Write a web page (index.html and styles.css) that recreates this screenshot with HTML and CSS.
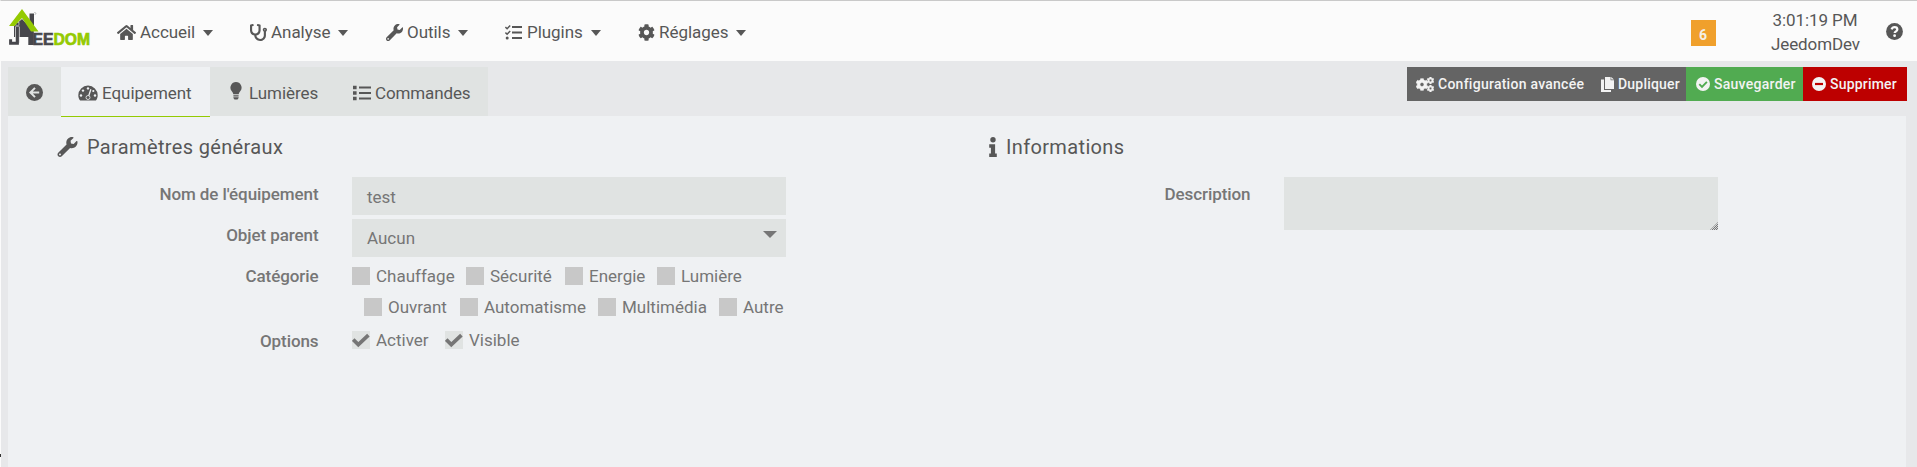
FILE: index.html
```html
<!DOCTYPE html>
<html lang="fr">
<head>
<meta charset="utf-8">
<title>Jeedom</title>
<link rel="stylesheet" href="styles.css">
</head>
<body>
<svg class="defs" aria-hidden="true">
  <symbol id="home" viewBox="0 0 576 512"><path d="M280.37 148.26L96 300.11V464a16 16 0 0 0 16 16l112.06-.29a16 16 0 0 0 15.92-16V368a16 16 0 0 1 16-16h64a16 16 0 0 1 16 16v95.64a16 16 0 0 0 16 16.05L464 480a16 16 0 0 0 16-16V300L295.67 148.26a12.19 12.19 0 0 0-15.3 0zM571.6 251.47L488 182.56V44.05a12 12 0 0 0-12-12h-56a12 12 0 0 0-12 12v72.61L318.47 43a48 48 0 0 0-61 0L4.34 251.47a12 12 0 0 0-1.6 16.9l25.5 31A12 12 0 0 0 45.15 301l235.22-193.74a12.19 12.19 0 0 1 15.3 0L530.9 301a12 12 0 0 0 16.9-1.6l25.5-31a12 12 0 0 0-1.7-16.93z"/></symbol>
  <symbol id="stetho" viewBox="0 0 512 512"><path d="M447.1 112c-34.2.5-62.3 28.4-63 62.6-.5 24.3 12.5 45.6 32 56.8V344c0 57.3-50.2 104-112 104-60 0-109.2-44.1-111.9-99.2C265 333.8 320 269.2 320 192V36.6c0-11.4-8.1-21.3-19.3-23.5L237.8.5c-13-2.6-25.6 5.8-28.2 18.8L206.4 35c-2.6 13 5.8 25.6 18.8 28.2l30.7 6.1v121.4c0 52.9-42.2 96.7-95.1 97.2-53.4.5-96.9-42.7-96.9-96V69.4l30.7-6.1c13-2.6 21.4-15.2 18.8-28.2l-3.1-15.7C107.7 6.4 95.1-2 82.1.6L19.3 13C8.1 15.3 0 25.1 0 36.6V192c0 77.3 55.1 142 128.1 156.8C130.7 439.2 208.6 512 304 512c97 0 176-75.4 176-168V231.4c19.1-11.1 32-31.7 32-55.4 0-35.7-29.2-64.5-64.9-64zm.9 80c-8.8 0-16-7.2-16-16s7.2-16 16-16 16 7.2 16 16-7.2 16-16 16z"/></symbol>
  <symbol id="wrench" viewBox="0 0 512 512"><path d="M507.73 109.1c-2.24-9.03-13.54-12.09-20.12-5.51l-74.36 74.36-67.88-11.31-11.31-67.88 74.36-74.36c6.62-6.62 3.43-17.9-5.66-20.16-47.38-11.74-99.55.91-136.58 37.93-39.64 39.64-50.55 97.1-34.05 147.2L18.74 402.76c-24.99 24.99-24.99 65.51 0 90.5 24.99 24.99 65.51 24.99 90.5 0l213.21-213.21c50.12 16.71 107.47 5.68 147.37-34.22 37.07-37.07 49.7-89.32 37.91-136.73zM64 472c-13.25 0-24-10.75-24-24 0-13.26 10.75-24 24-24s24 10.74 24 24c0 13.25-10.75 24-24 24z"/></symbol>
  <symbol id="cog" viewBox="0 0 512 512"><path d="M487.4 315.7l-42.6-24.6c4.3-23.2 4.3-47 0-70.2l42.6-24.6c4.9-2.8 7.1-8.6 5.5-14-11.1-35.6-30-67.8-54.7-94.6-3.8-4.1-10-5.1-14.8-2.3L380.8 110c-17.9-15.4-38.5-27.3-60.8-35.1V25.8c0-5.6-3.9-10.5-9.4-11.7-36.7-8.2-74.3-7.8-109.2 0-5.5 1.2-9.4 6.1-9.4 11.7V75c-22.2 7.9-42.8 19.8-60.8 35.1L88.7 85.5c-4.9-2.8-11-1.9-14.8 2.3-24.7 26.7-43.6 58.9-54.7 94.6-1.7 5.4.6 11.2 5.5 14L67.3 221c-4.3 23.2-4.3 47 0 70.2l-42.6 24.6c-4.9 2.8-7.1 8.6-5.5 14 11.1 35.6 30 67.8 54.7 94.6 3.8 4.1 10 5.1 14.8 2.3l42.6-24.6c17.9 15.4 38.5 27.3 60.8 35.1v49.2c0 5.6 3.9 10.5 9.4 11.7 36.7 8.2 74.3 7.8 109.2 0 5.5-1.2 9.4-6.1 9.4-11.7v-49.2c22.2-7.9 42.8-19.8 60.8-35.1l42.6 24.6c4.9 2.8 11 1.9 14.8-2.3 24.7-26.7 43.6-58.9 54.7-94.6 1.5-5.5-.7-11.3-5.6-14.1zM256 336c-44.1 0-80-35.9-80-80s35.9-80 80-80 80 35.9 80 80-35.9 80-80 80z"/></symbol>
  <symbol id="tasks" viewBox="0 0 17 16"><path d="M7 2.5h10M7 8h10M7 13.5h10" stroke="currentColor" stroke-width="2" fill="none"/><path d="M.4 2.6l1.7 1.6L5.2.9M.4 8.1l1.7 1.6 3.1-3.3" stroke="currentColor" stroke-width="1.5" fill="none"/><circle cx="2.2" cy="13.5" r="1.5"/></symbol>
  <symbol id="list" viewBox="0 0 18 16"><path d="M0 .8h3.6v3.4H0zM0 6.3h3.6v3.4H0zM0 11.8h3.6v3.4H0zM6 1.5h12v2H6zM6 7h12v2H6zM6 12.5h12v2H6z"/></symbol>
  <symbol id="back" viewBox="0 0 17 17"><circle cx="8.5" cy="8.5" r="8.5"/><path d="M9 3.9L4.4 8.5 9 13.1M4.6 8.5h8.6" fill="none" stroke="#e0e3e2" stroke-width="2"/></symbol>
  <symbol id="gauge" viewBox="0 0 20 16"><path d="M10 .6A9.6 9.6 0 0 0 .3 10.2c0 1.8.5 3.4 1.4 4.8.3.4.6.6 1 .6h14.6c.4 0 .7-.2 1-.6.9-1.4 1.4-3 1.4-4.8A9.6 9.6 0 0 0 10 .6z"/><g fill="#eff1f3"><circle cx="10" cy="3.4" r="1.2"/><circle cx="5" cy="5.6" r="1.2"/><circle cx="3" cy="10.5" r="1.2"/><circle cx="17" cy="10.5" r="1.2"/><circle cx="15.3" cy="6" r="1.1"/></g><path d="M12.9 4.2L10.3 12" stroke="#eff1f3" stroke-width="1.3"/><circle cx="10" cy="12.5" r="2" stroke="#eff1f3" stroke-width=".8"/></symbol>
  <symbol id="bulb" viewBox="0 0 12 18"><path d="M6 0a5.6 5.6 0 0 0-4.4 9c.8 1 1.5 2.1 1.8 3.2h5.2c.3-1.1 1-2.2 1.8-3.2A5.6 5.6 0 0 0 6 0zM3.4 13.2h5.2v1.3H3.4zM3.4 15.2h5.2v.9L7.5 17.4h-3L3.4 16.1z"/></symbol>
  <symbol id="help" viewBox="0 0 17 17"><circle cx="8.5" cy="8.5" r="8.4"/><path d="M5.6 6.4C6.2 4.7 7.1 4.2 8.6 4.2c1.5 0 2.7.9 2.7 2.2 0 2-2.6 1.9-2.6 3.7" fill="none" stroke="#fbfbfb" stroke-width="2.3"/><circle cx="8.6" cy="12.7" r="1.4" fill="#fbfbfb"/></symbol>
  <symbol id="copy" viewBox="0 0 13 15"><path d="M4 0h5.6v3.2H13V12H4zM10.2 0L13 2.6h-2.8zM0 2.5h3v10.4h7V15H0z"/></symbol>
  <symbol id="check" viewBox="0 0 14 14"><circle cx="7" cy="7" r="7"/><path d="M3.3 7.2L6 9.9l4.9-5" fill="none" stroke="#51ab51" stroke-width="1.9"/></symbol>
  <symbol id="minus" viewBox="0 0 14 14"><circle cx="7" cy="7" r="7"/><path d="M3 5.9h8v2.2H3z" fill="#bd0000"/></symbol>
  <symbol id="info" viewBox="0 0 8 20"><circle cx="4" cy="2.8" r="2.7"/><path d="M.2 7.3h5.9v9.2h1.7V20H.2v-3.5h1.7v-5.700H.2z"/></symbol>
  <symbol id="tick" viewBox="0 0 18 18"><path d="M1.2 8.6l5.1 5L16.4 4.2" fill="none" stroke="currentColor" stroke-width="3.7"/></symbol>
</svg>

<header class="navbar">
  <svg class="logo" viewBox="0 0 84 38" role="img" aria-label="Jeedom">
    <path d="M20.500 4.500H25V18h-4.500z" fill="#46464b"/>
    <path d="M5 17l8-7 9 9 2.800 3.500V36H19.300v-8H5z" fill="#46464b"/>
    <path d="M8.400 17.500v16.300" stroke="#d8d8da" stroke-width="4.600" fill="none"/>
    <path d="M8.400 18v16.200H1.600v-4" stroke="#46464b" stroke-width="3" fill="none"/>
    <path d="M6.500 13.200h3.800v3.300H6.500z" fill="#d8d8da"/>
    <path d="M7.200 13.800h2.400v2.200H7.200z" fill="#46464b"/>
    <path d="M25.500 3l1.300 1.500-.8 1.200" stroke="#999" stroke-width=".8" fill="none"/>
    <path d="M13 0L29.500 22.500H22L13 9 5.500 17H0z" fill="#94ca02"/>
    <text x="23.500" y="35.800" class="logo-text" textLength="57.500" lengthAdjust="spacingAndGlyphs">EE<tspan class="logo-green">DOM</tspan></text>
  </svg>
  <nav class="menu">
    <a class="menu-item"><svg class="ico home"><use href="#home"/></svg>Accueil<i class="caret"></i></a>
    <a class="menu-item"><svg class="ico stetho"><use href="#stetho"/></svg>Analyse<i class="caret"></i></a>
    <a class="menu-item"><svg class="ico wrench"><use href="#wrench"/></svg>Outils<i class="caret"></i></a>
    <a class="menu-item"><svg class="ico tasks"><use href="#tasks"/></svg>Plugins<i class="caret"></i></a>
    <a class="menu-item"><svg class="ico cog"><use href="#cog"/></svg>Réglages<i class="caret"></i></a>
  </nav>
  <span class="badge">6</span>
  <div class="clock"><div>3:01:19 PM</div><div>JeedomDev</div></div>
  <svg class="help"><use href="#help"/></svg>
</header>

<div class="toolbar">
  <nav class="tabs">
    <a class="tab tab-back"><svg class="i-back"><use href="#back"/></svg></a>
    <a class="tab tab-active"><svg class="i-gauge"><use href="#gauge"/></svg>Equipement</a>
    <a class="tab tab-light"><svg class="i-bulb"><use href="#bulb"/></svg>Lumières</a>
    <a class="tab tab-cmd"><svg class="i-list"><use href="#list"/></svg>Commandes</a>
  </nav>
  <div class="actions">
    <a class="btn btn-config"><svg class="i-cogs" viewBox="0 0 18 15"><g stroke="currentColor" stroke-width="22"><use href="#cog" x="-.3" y="1.200" width="12.600" height="12.600"/><use href="#cog" x="10.800" y="-.2" width="7.400" height="7.400"/><use href="#cog" x="10.800" y="7.800" width="7.400" height="7.400"/></g></svg>Configuration avancée</a>
    <a class="btn btn-copy"><svg class="i-copy"><use href="#copy"/></svg>Dupliquer</a>
    <a class="btn btn-save"><svg class="i-dot"><use href="#check"/></svg>Sauvegarder</a>
    <a class="btn btn-delete"><svg class="i-dot"><use href="#minus"/></svg>Supprimer</a>
  </div>
</div>

<main class="panel">
  <section class="column">
    <h2 class="legend"><svg class="i-legend-wrench"><use href="#wrench"/></svg>Paramètres généraux</h2>
    <div class="row row-field"><span class="label">Nom de l'équipement</span><div class="field">test</div></div>
    <div class="row row-field row-parent"><span class="label">Objet parent</span><div class="field field-select">Aucun<i class="select-caret"></i></div></div>
    <div class="row row-category"><span class="label">Catégorie</span>
      <div class="checks">
        <div class="line line-one">
          <span class="check"><i class="box"></i>Chauffage</span><span class="check"><i class="box"></i>Sécurité</span><span class="check"><i class="box"></i>Energie</span><span class="check"><i class="box"></i>Lumière</span>
        </div>
        <div class="line line-two">
          <span class="check"><i class="box"></i>Ouvrant</span><span class="check"><i class="box"></i>Automatisme</span><span class="check"><i class="box"></i>Multimédia</span><span class="check"><i class="box"></i>Autre</span>
        </div>
      </div>
    </div>
    <div class="row row-options"><span class="label">Options</span>
      <div class="line line-options">
        <span class="check"><svg class="box box-on"><use href="#tick"/></svg>Activer</span><span class="check"><svg class="box box-on"><use href="#tick"/></svg>Visible</span>
      </div>
    </div>
  </section>
  <section class="column column-info">
    <h2 class="legend"><svg class="i-info"><use href="#info"/></svg>Informations</h2>
    <div class="row row-field"><span class="label">Description</span><div class="area"><i class="grip"></i></div></div>
  </section>
</main>
<i class="edge-mark"></i>
</body>
</html>
```

FILE: styles.css
```css
* { box-sizing: border-box; }
body {
  margin: 0;
  height: 467px;
  overflow: hidden;
  display: flex;
  flex-direction: column;
  border-top: 1px solid #c9c9c9;
  border-left: 1px solid #fbfbfb;
  background: #e7e8ea;
  color: #575757;
  font: 17px/24px Roboto, sans-serif;
}
svg { fill: currentColor; flex: none; display: block; }
.defs { position: absolute; width: 0; height: 0; }

.navbar { height: 60px; flex: none; display: flex; background: #fbfbfb; }
.logo { width: 84px; height: 38px; margin: 8px 24px 0 8px; }
.logo-text { font: 900 16px "Liberation Sans", sans-serif; fill: #46464b; stroke: #46464b; stroke-width: .7; }
.logo-green { fill: #94ca02; stroke: #94ca02; }
.menu { display: grid; grid-template-columns: 133px 136px 119px 133px 120px; height: 62px; letter-spacing: -.05px; }
.menu-item { display: flex; align-items: center; height: 62px; }
.ico { width: 17px; height: 17px; margin-right: 4px; }
.ico.home { width: 19px; }
.ico.tasks { margin-right: 5px; }
.caret { border: 5.5px solid transparent; border-top: 6px solid #575757; border-bottom: 0; margin: 2px 0 0 8px; }
.badge {
  width: 25px; height: 26px; margin: 19px 55px 0 auto; padding: 3px 1px 0 0;
  background: #f0a02c; color: #f4f0e8; font-size: 14px; font-weight: 700; text-align: center;
}
.clock { width: 88px; padding-top: 7px; text-align: center; white-space: nowrap; letter-spacing: -.1px; }
.help { width: 17px; height: 17px; margin: 22px 14px 0 27px; }

.toolbar { height: 55px; flex: none; display: flex; justify-content: space-between; padding: 6px 10px 0 7px; }
.tabs { display: flex; height: 49px; background: #e0e3e2; letter-spacing: -.05px; }
.tab { display: flex; align-items: center; padding-top: 2px; }
.tab-back { width: 53px; padding-left: 18px; }
.tab-active { position: relative; width: 149px; padding: 3px 0 0 17px; background: #eff1f3; height: 50px; border-bottom: 1px solid #94ca02; }
.tab-light { width: 126px; padding-left: 20px; }
.tab-cmd { width: 152px; padding-left: 17px; letter-spacing: -.12px; }
.i-back { width: 17px; height: 17px; }
.i-gauge { width: 20px; height: 16px; margin-right: 4px; }
.i-bulb { width: 12px; height: 18px; margin: -3px 7px 0 0; }
.i-list { width: 18px; height: 16px; margin-right: 4px; }

.actions { display: flex; height: 34px; color: #f3f3f3; font-size: 14px; font-weight: 500; letter-spacing: .2px; }
.btn { display: flex; align-items: center; white-space: nowrap; background: #646464; }
.btn-config { width: 183px; padding-left: 9px; letter-spacing: .26px; }
.btn-copy { width: 96px; padding-left: 11px; }
.btn-save { width: 117px; padding-left: 10px; background: #51ab51; letter-spacing: .27px; }
.btn-delete { width: 104px; padding-left: 9px; background: #bd0000; }
.i-cogs { width: 18px; height: 15px; margin-right: 4px; }
.i-copy { width: 13px; height: 15px; margin-right: 4px; }
.i-dot { width: 14px; height: 14px; margin-right: 4px; }

.panel { flex: 1; display: flex; margin: 0 11px 0 7px; background: #eff1f3; color: #767676; }
.column { width: 932px; padding-top: 18px; }
.legend {
  display: flex; align-items: center; margin: 0 0 17px; padding-left: 49px; height: 26px;
  font-size: 20px; font-weight: 400; letter-spacing: .35px; color: #575757;
}
.i-legend-wrench { width: 21px; height: 20px; margin-right: 9px; }
.i-info { width: 8px; height: 20px; margin-right: 9px; }
.row { display: grid; grid-template-columns: 310.5px 434px; column-gap: 33.5px; }
.row-field { margin-bottom: 4px; }
.label { text-align: right; font-weight: 500; padding-top: 5px; letter-spacing: -.08px; }
.row-parent .label { padding-top: 4px; }
.field { height: 38px; padding: 8px 15px 0; background: #e0e3e2; }
.field-select { display: flex; justify-content: space-between; padding-top: 7px; }
.select-caret { border: 7px solid transparent; border-top-color: #767676; border-bottom: 0; margin: 5px -6px 0 0; height: 7px; }
.row-category .label { padding-top: 3px; }
.checks { padding-top: 6px; }
.line { display: grid; height: 31px; }
.line-one { grid-template-columns: 114px 99px 92px 110px; }
.line-two { grid-template-columns: 96px 138px 121px 80px; margin-left: 12px; }
.line-options { grid-template-columns: 93px 100px; }
.check { display: flex; align-items: center; height: 18px; white-space: nowrap; }
.box { width: 18px; height: 18px; margin-right: 6px; background: #c8c8c8; flex: none; }
.box-on { background: #e0e3e2; }
.row-options { padding-top: 2px; }
.row-options .label { padding-top: 0; margin-top: -2px; }
.area { height: 53px; background: #e0e3e2; display: flex; align-items: flex-end; justify-content: flex-end; }
.grip {
  width: 8px; height: 8px; clip-path: polygon(100% 0, 100% 100%, 0 100%);
  background: repeating-conic-gradient(#777 0 25%, #d6d8d8 0 50%) 0 0 / 2px 2px;
}
.edge-mark { position: absolute; left: 0; top: 454px; width: 1px; height: 3px; background: #333; }
```
